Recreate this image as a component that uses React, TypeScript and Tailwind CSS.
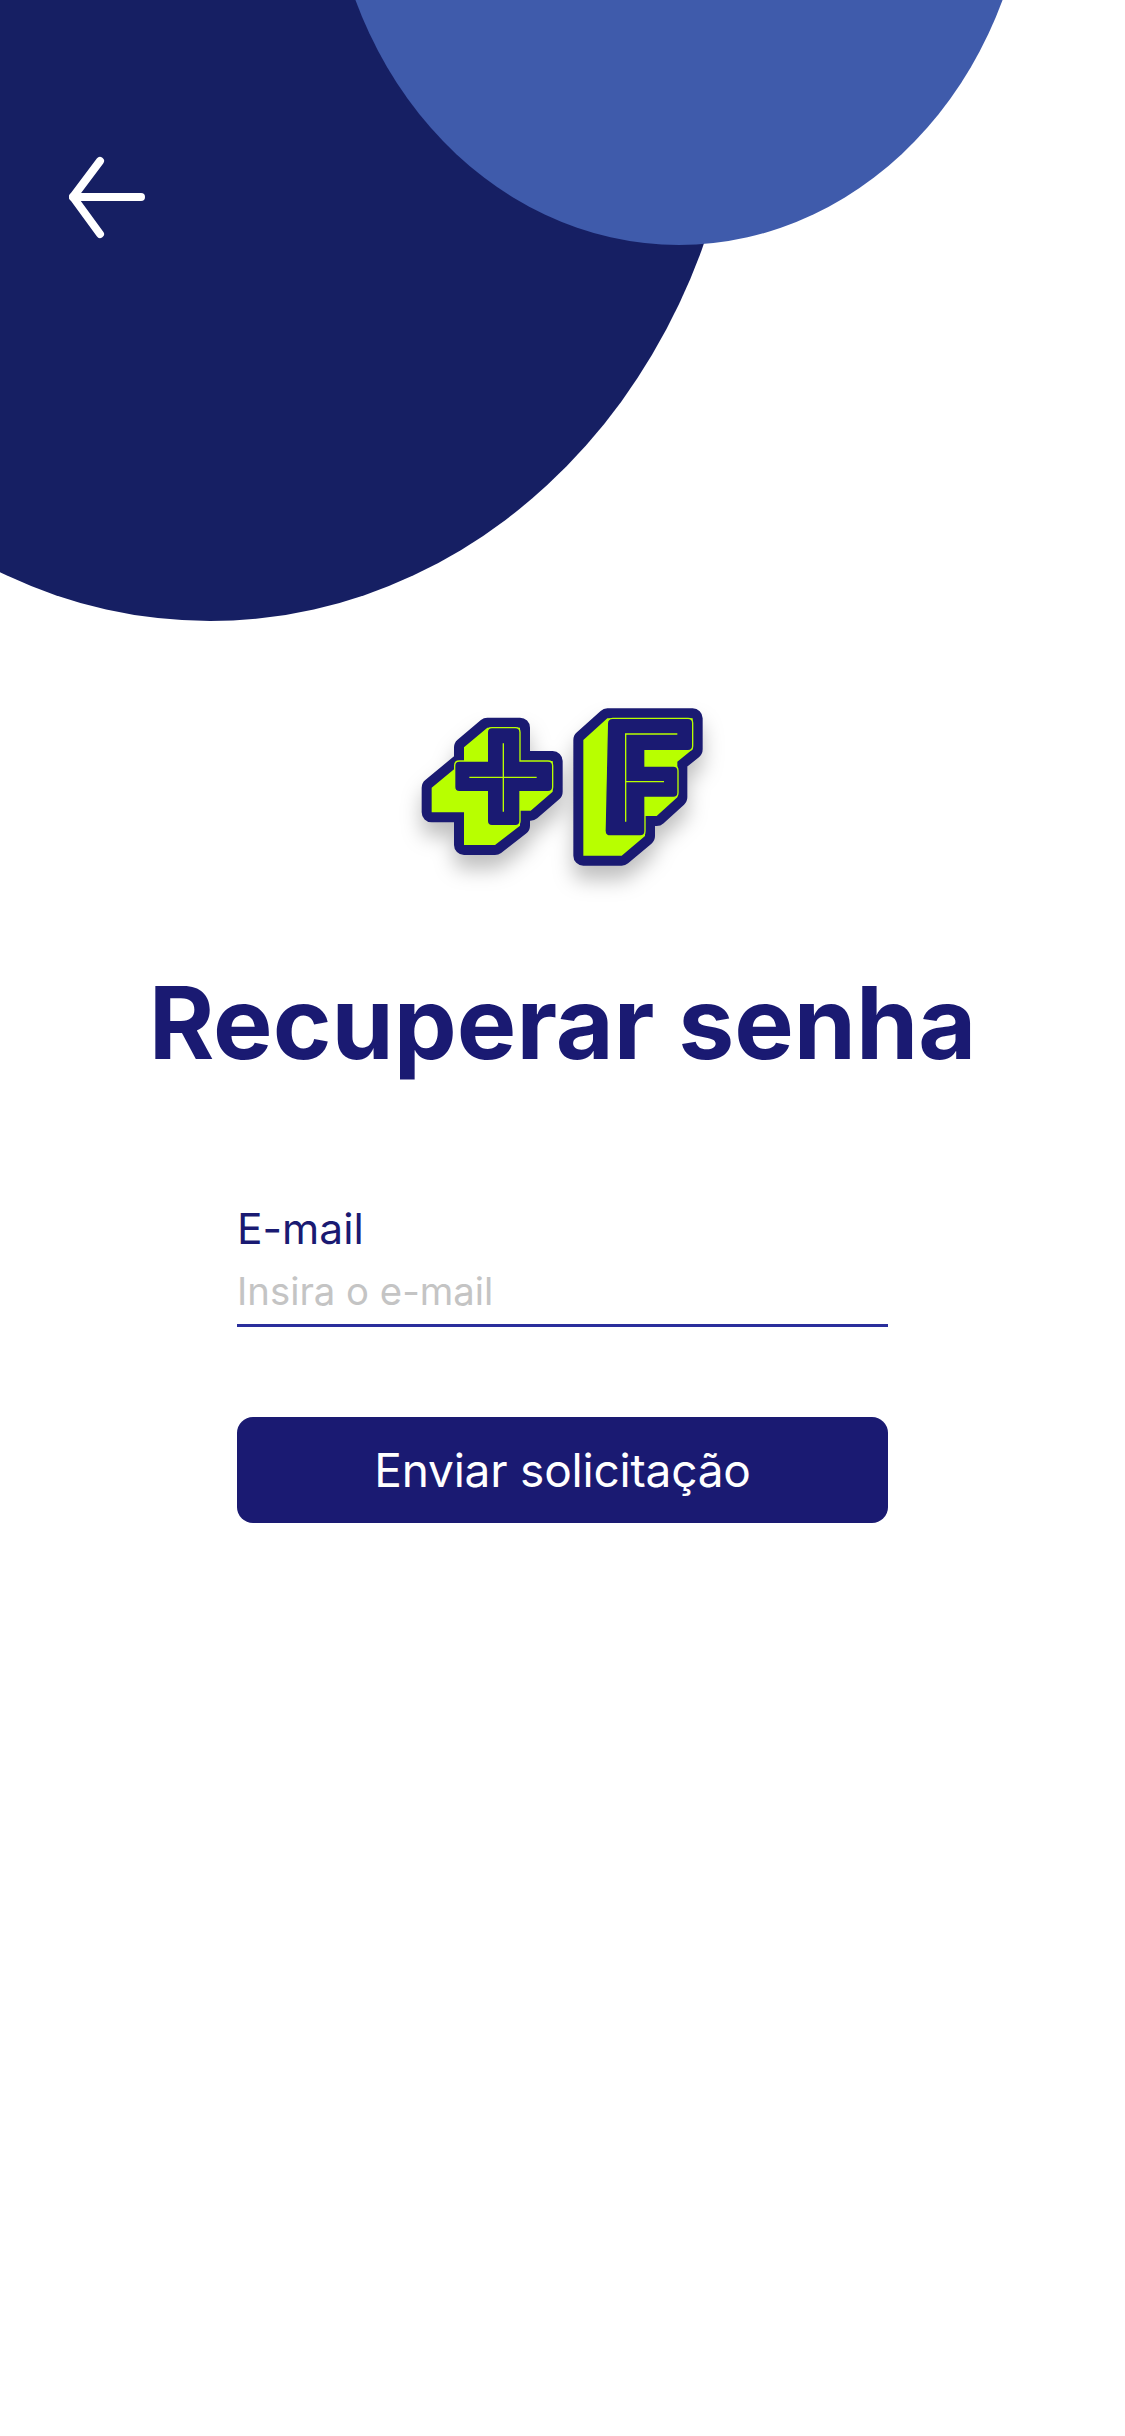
const navy = "#1a1a72";
const lime = "#b8ff00";

const BackArrow = () => (
  <svg width="84" height="84" viewBox="0 0 84 84" fill="none" stroke="#ffffff" strokeWidth="8" strokeLinecap="round" strokeLinejoin="round">
    <path d="M74 41H6" />
    <path d="M33 5L6 41L33 78" />
  </svg>
);

const Logo = () => (
  <svg width="320" height="200" viewBox="0 0 960 600" className="mr-[5px] drop-shadow-[0_14px_10px_rgba(0,0,0,0.25)]">
    {/* plus */}
    <path
      d="M95 293L192 213V172L262 113H360V213H458V305L392 362H360V407L285 465H192V367H95Z"
      fill={lime}
      stroke={navy}
      strokeWidth="60"
      strokeLinejoin="round"
      paintOrder="stroke"
    />
    <path
      d="M262 127q0-14 14-14h70q14 0 14 14v86h84q14 0 14 14v64q0 14-14 14h-84v88q0 14-14 14h-70q-14 0-14-14v-88h-84q-14 0-14-14v-64q0-14 14-14h84Z"
      fill={navy}
      stroke={lime}
      strokeWidth="4"
    />
    <path d="M208 262H410M310 160V365" fill="none" stroke={lime} strokeWidth="4" />
    {/* F */}
    <path
      d="M550 150L622 85H878V178L832 215V322L770 378H735V438L665 497H550Z"
      fill={lime}
      stroke={navy}
      strokeWidth="60"
      strokeLinejoin="round"
      paintOrder="stroke"
    />
    <path
      d="M622 101q0-16 16-16h226q14 0 14 14v69q0 14-14 14H735v46h85q14 0 14 14v66q0 14-14 14h-85v102q0 14-14 14h-90q-16 0-16-16Z"
      fill={navy}
      stroke={lime}
      strokeWidth="4"
    />
    <path d="M832 132H677V395M677 275H792" fill="none" stroke={lime} strokeWidth="4" />
  </svg>
);

export default function App() {
  return (
    <div className="relative h-[2436px] w-[1125px] overflow-hidden bg-white font-['Inter',sans-serif]">
      {/* background blobs */}
      <div className="absolute left-[-322px] top-[-579px] h-[1200px] w-[1064px] rounded-[50%] bg-[#161f63]" />
      <div className="absolute left-[328px] top-[-555px] h-[800px] w-[702px] rounded-[50%] bg-[#3f5bab]" />

      <div className="relative flex flex-col items-center">
        <div className="h-[690px] w-full pl-[67px] pt-[156px]">
          <BackArrow />
        </div>

        <Logo />

        <h1 className="mt-[73px] text-[100px] leading-[120px] font-bold text-[#1a1a72]">
          Recuperar senha
        </h1>

        <div className="mt-[121px] flex w-[651px] flex-col">
          <label className="text-[42.5px] leading-[50px] text-[#1a1a72]">E-mail</label>
          <div className="mt-[14px] border-b-[3px] border-[#2a2f9c] pb-[10px] text-[38.3px] leading-[46px] text-[#c4c4c4]">
            Insira o e-mail
          </div>
          <button className="mt-[90px] h-[106px] rounded-[16px] bg-[#1a1a72] text-[46px] tracking-[-0.2px] text-white">
            Enviar solicitação
          </button>
        </div>
      </div>
    </div>
  );
}
